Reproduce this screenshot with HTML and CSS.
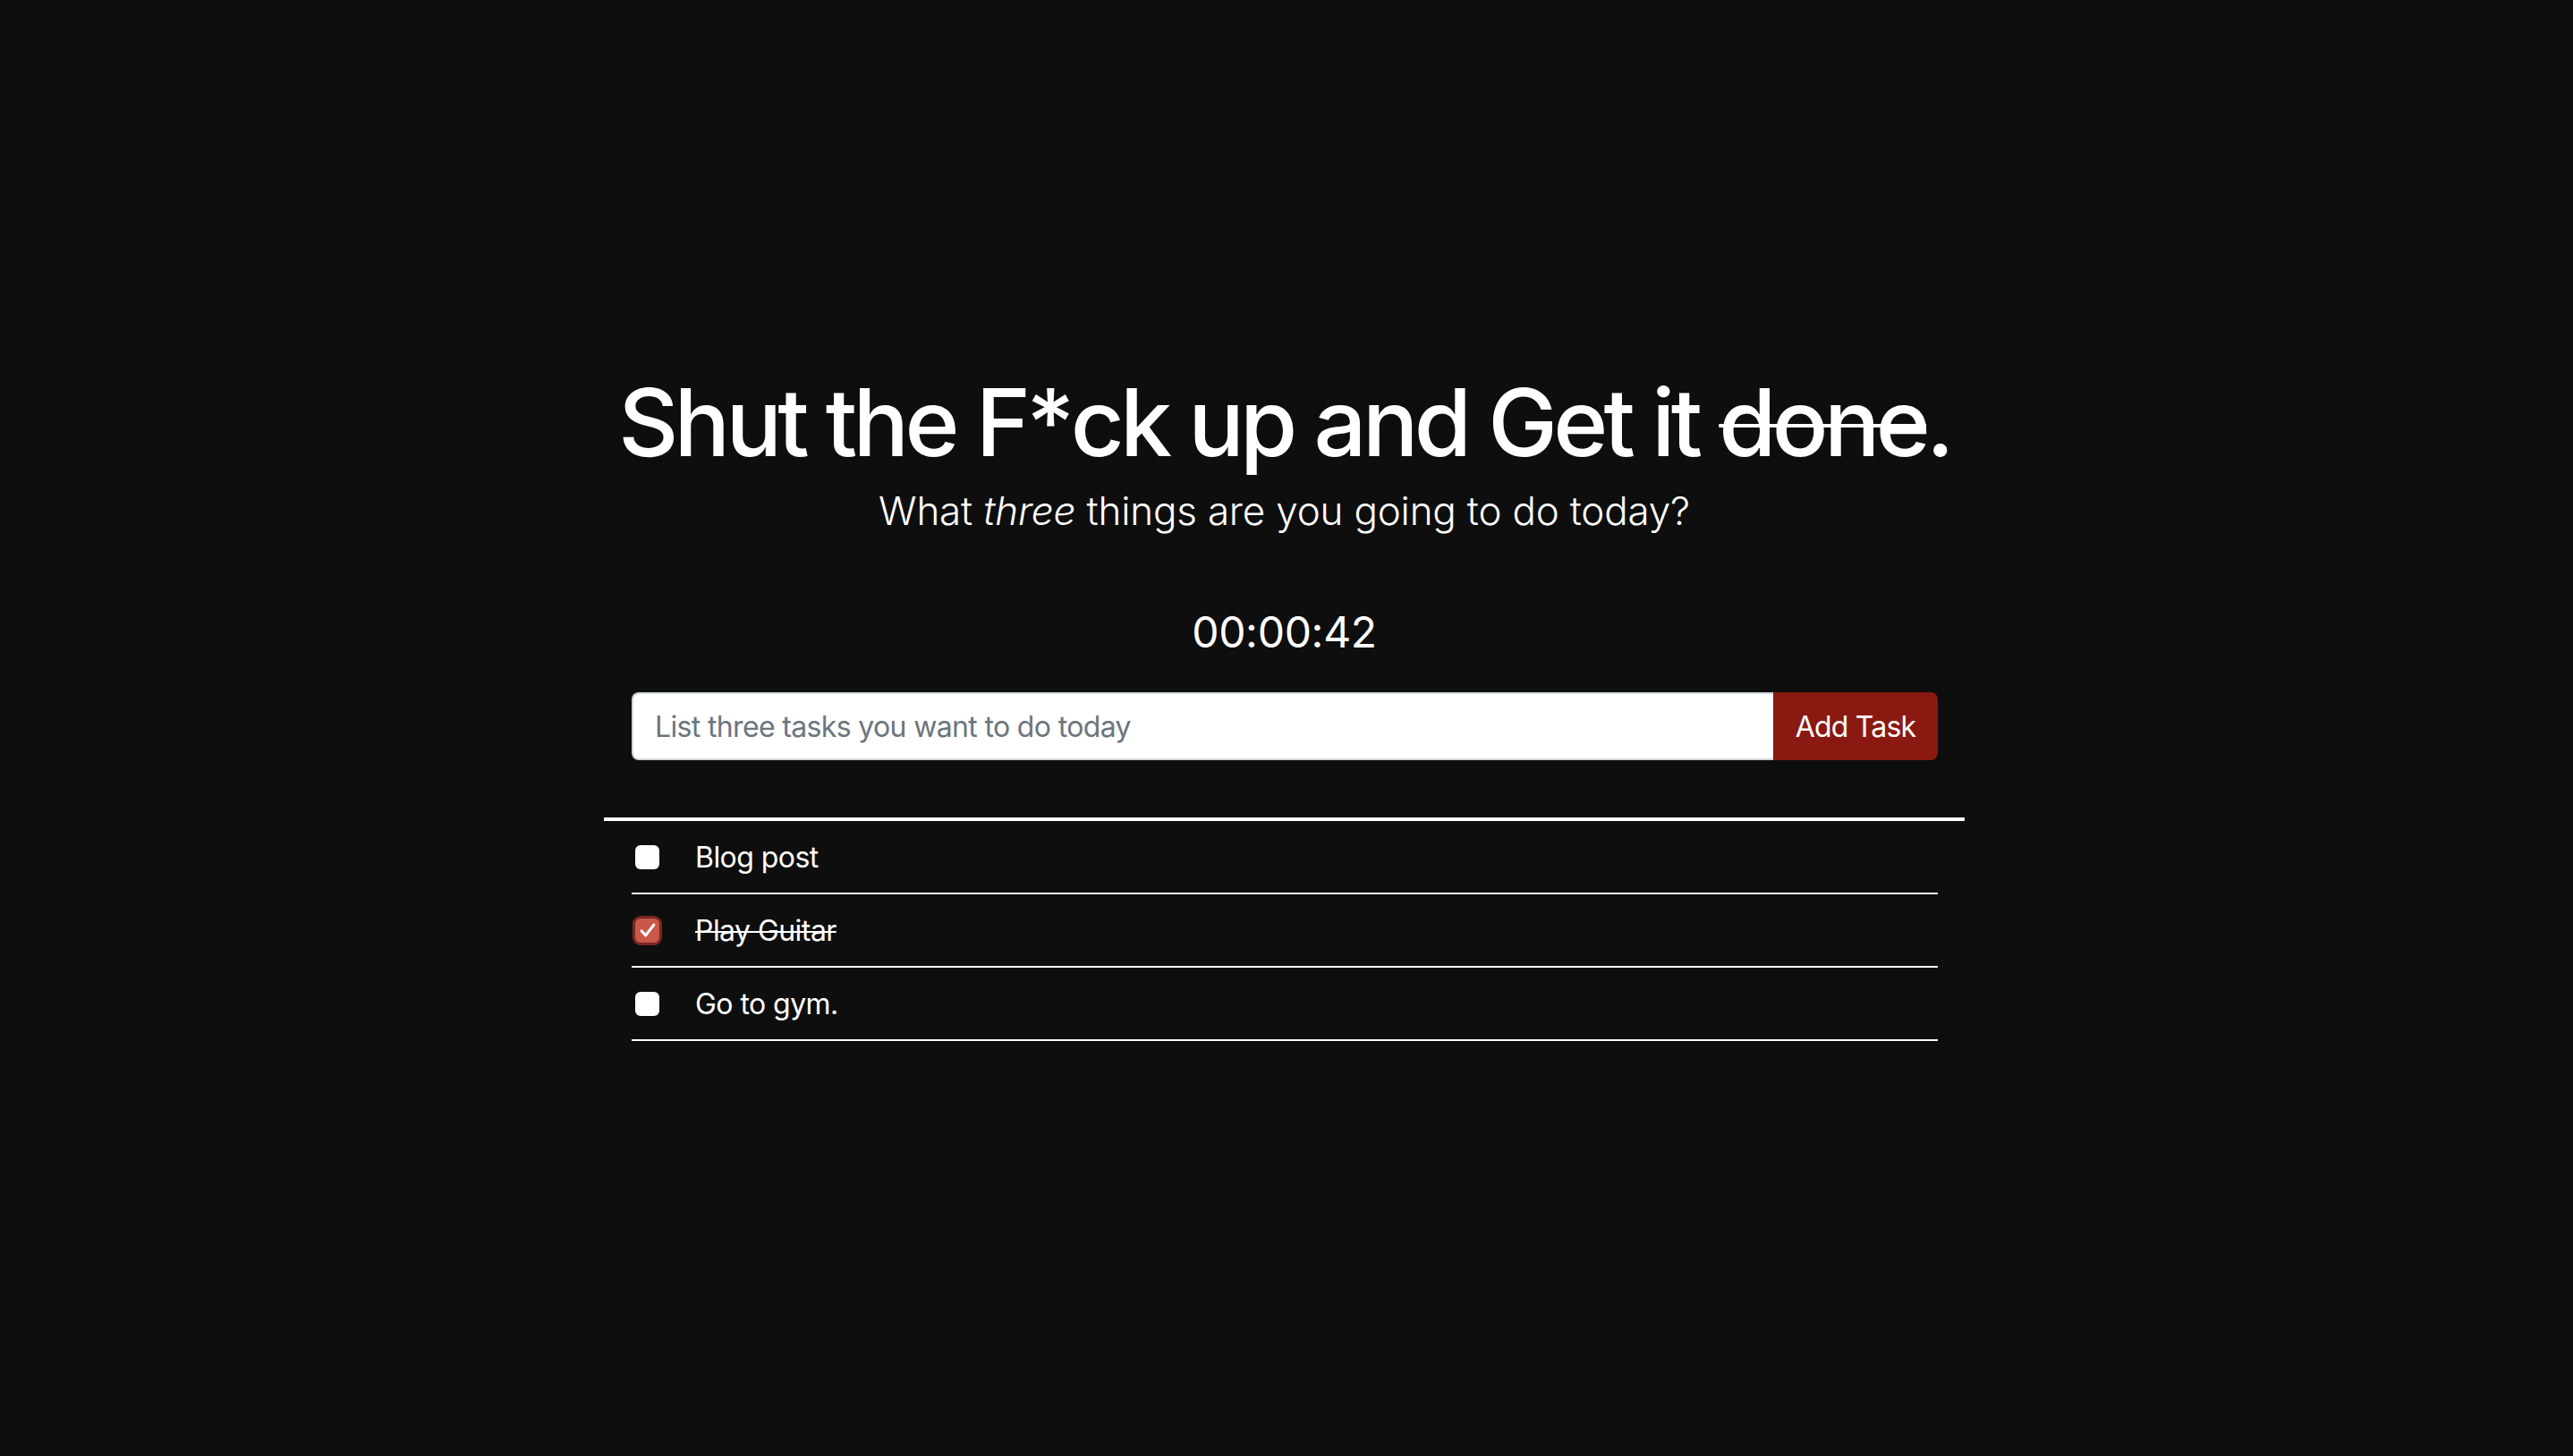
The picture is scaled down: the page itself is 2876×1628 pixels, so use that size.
FILE: index.html
```html
<!DOCTYPE html>
<html lang="en">
<head>
<meta charset="utf-8">
<title>Shut the F*ck up and Get it done.</title>
<link rel="stylesheet" href="styles.css">
</head>
<body>
<main class="app">
  <h1 class="title">Shut the F*ck up and Get it <s>done</s>.</h1>
  <p class="subtitle">What <em>three</em> things are you going to do today?</p>
  <div class="timer">00:00:42</div>
  <form class="task-form">
    <input class="task-input" type="text" placeholder="List three tasks you want to do today">
    <button class="task-button" type="button">Add Task</button>
  </form>
  <div class="divider"></div>
  <ul class="tasks">
    <li class="task">
      <span class="check"></span>
      <span class="task-text">Blog post</span>
    </li>
    <li class="task done">
      <span class="check checked"><svg viewBox="0 0 16 16" width="26" height="26"><path d="M3.8 8.6l2.8 3L12.2 4.4" fill="none" stroke="#fff" stroke-width="1.9" stroke-linecap="round" stroke-linejoin="round"/></svg></span>
      <span class="task-text">Play Guitar</span>
    </li>
    <li class="task">
      <span class="check"></span>
      <span class="task-text">Go to gym.</span>
    </li>
  </ul>
</main>
</body>
</html>
```
FILE: styles.css
```css
html, body {
  margin: 0;
  padding: 0;
  background: #0e0e0e;
  color: #ffffff;
  font-family: Inter, "Noto Sans", "Liberation Sans", sans-serif;
}

body {
  min-height: 1628px;
}

.app {
  width: 1521px;
  margin: 0 auto;
  padding: 410px 5px 0 0;
  box-sizing: content-box;
}

.title {
  margin: 0;
  font-size: 104px;
  line-height: 1.2;
  font-weight: 500;
  text-align: center;
  letter-spacing: -4.75px;
  white-space: nowrap;
}

.title s {
  text-decoration-thickness: 4px;
}

.subtitle {
  margin: 10px 0 0;
  font-size: 44px;
  line-height: 1.2;
  font-weight: 300;
  text-align: center;
  letter-spacing: -0.2px;
}

.timer {
  margin-top: 80px;
  font-size: 48px;
  line-height: 1.2;
  text-align: center;
  letter-spacing: -0.3px;
}

.task-form {
  display: flex;
  margin: 39px 30px 0 31px;
  height: 76px;
}

.task-input {
  flex: 1;
  min-width: 0;
  box-sizing: border-box;
  height: 76px;
  margin: 0;
  padding: 0 24px;
  border: 2px solid #ced4da;
  border-right: none;
  border-radius: 8px 0 0 8px;
  background: #ffffff;
  font-family: inherit;
  font-size: 32px;
  letter-spacing: -0.65px;
  color: #495057;
  outline: none;
}

.task-input::placeholder {
  color: #6c757d;
}

.task-button {
  width: 184px;
  height: 76px;
  margin: 0;
  border: none;
  border-radius: 0 8px 8px 0;
  background: #8a1a11;
  color: #ffffff;
  font-family: inherit;
  font-size: 32px;
  letter-spacing: -0.8px;
  padding: 0;
}

.divider {
  margin-top: 64px;
  height: 4px;
  background: #ffffff;
}

.tasks {
  list-style: none;
  margin: 0 30px 0 31px;
  padding: 0;
}

.task {
  display: flex;
  align-items: center;
  height: 80px;
  border-bottom: 2px solid #ffffff;
  padding-left: 4px;
}

.check {
  width: 27px;
  height: 27px;
  border-radius: 6px;
  background: #ffffff;
  display: flex;
  align-items: center;
  justify-content: center;
  flex: none;
}

.check.checked {
  background: #c9584a;
  box-shadow: 0 0 0 3px #7a2520;
}

.task-text {
  margin-left: 40px;
  padding-top: 2px;
  font-size: 32px;
  line-height: 1;
  letter-spacing: -0.55px;
}

.task.done .task-text {
  text-decoration: line-through;
  text-decoration-thickness: 2px;
}
```
